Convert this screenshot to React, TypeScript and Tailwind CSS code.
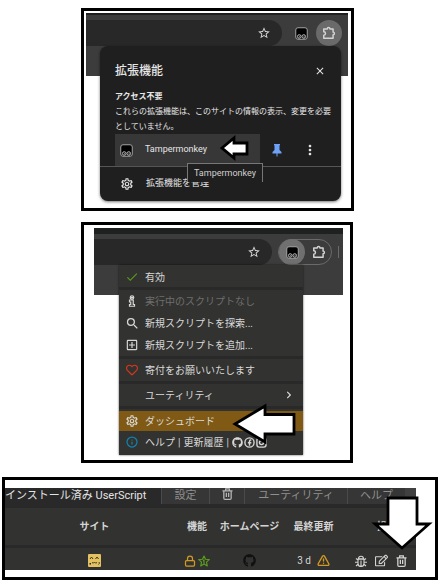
import type { ReactNode } from "react";
import {
  MdCheck,
  MdClose,
  MdMoreVert,
  MdOutlineAddBox,
  MdOutlineSettings,
  MdSearch,
  MdStarBorder,
} from "react-icons/md";
import { FaChevronRight, FaGithub, FaRegEdit, FaRegHeart } from "react-icons/fa";
import { Info, Lock, TriangleAlert } from "lucide-react";

function TamperIcon({ className }: { className?: string }) {
  return (
    <svg viewBox="0 0 26 26" className={className} aria-hidden="true">
      <rect x="1.5" y="1.5" width="23" height="23" rx="4.5" fill="#000" stroke="#a3a3a3" strokeWidth="2" />
      <g fill="#111" stroke="#c9c9c9" strokeWidth="1.8">
        <circle cx="8.5" cy="19" r="3.6" />
        <circle cx="17.5" cy="19" r="3.6" />
      </g>
      <circle cx="9" cy="19.5" r="1" fill="#ccc" />
      <circle cx="18" cy="19.5" r="1" fill="#ccc" />
    </svg>
  );
}

function PuzzleIcon({ className }: { className?: string }) {
  return (
    <svg viewBox="0 0 24 24" className={className} fill="none" stroke="currentColor" strokeWidth="2.5" strokeLinejoin="round" aria-hidden="true">
      <path d="M3 5h6a2.3 2.3 0 0 1 4.600 0H19v5.500a2.300 2.300 0 0 1 0 4.600V21H3v-5a3 3 0 0 0 0-6Z" />
    </svg>
  );
}

function PinIcon({ className }: { className?: string }) {
  return (
    <svg viewBox="0 0 20 26" className={className} fill="currentColor" aria-hidden="true">
      <path d="M4 0h12v2l-1 1v9l4 4v3h-8v5l-1 2-1-2v-5H1v-3l4-4V3L4 2Z" />
    </svg>
  );
}

function TrashIcon({ className }: { className?: string }) {
  return (
    <svg viewBox="0 0 24 26" className={className} fill="none" stroke="currentColor" strokeWidth="2.8" aria-hidden="true">
      <path d="M1 6h22M8 6V2h8v4M4 6v16q0 2.500 2.500 2.500h11q2.500 0 2.500-2.500V6M9.500 10.500v9M14.500 10.500v9" />
    </svg>
  );
}

function BugIcon({ className }: { className?: string }) {
  return (
    <svg viewBox="0 0 24 24" className={className} fill="none" stroke="currentColor" strokeWidth="2.200" aria-hidden="true">
      <path d="M7 7.500a5 5 0 0 1 10 0ZM6 8.500h12V17a6 6 0 0 1-12 0ZM12 11v11M6 10 2 7M18 10l4-3M0 14.500h6M18 14.500h6M6.500 18 2 22M17.500 18l4.500 4" />
    </svg>
  );
}

function StarOneIcon({ className }: { className?: string }) {
  return (
    <svg viewBox="0 0 24 24" className={className} fill="none" stroke="currentColor" strokeWidth="2.400" strokeLinejoin="round" aria-hidden="true">
      <path d="m12 2 3 6.500 7.500.8-5.500 5 1.500 7.500-6.500-3.800-6.500 3.800L7 14.300l-5.500-5L9 8.500ZM10 11.500 12 10V17" />
    </svg>
  );
}

function ScriptInfoIcon({ className }: { className?: string }) {
  return (
    <svg viewBox="0 0 16 24" className={className} fill="none" stroke="currentColor" strokeWidth="2.400" aria-hidden="true">
      <circle cx="8" cy="5" r="3.500" />
      <path d="M3 10h7.500v9H13v3.500H3V19h2.500v-5H3Z" />
      <circle cx="8" cy="5" r="1" />
    </svg>
  );
}

function FacebookIcon({ className }: { className?: string }) {
  return (
    <svg viewBox="0 0 24 24" className={className} fill="none" stroke="currentColor" strokeWidth="3" aria-hidden="true">
      <circle cx="12" cy="12" r="10" />
      <path d="M16 6.500h-1.500q-2.500 0-2.500 2.500v10M8.500 12.500H16" />
    </svg>
  );
}

function InstagramIcon({ className }: { className?: string }) {
  return (
    <svg viewBox="0 0 24 24" className={className} fill="none" stroke="currentColor" strokeWidth="3" aria-hidden="true">
      <rect x="2" y="2" width="20" height="20" rx="5" />
      <circle cx="12" cy="12" r="4.500" />
    </svg>
  );
}

function FaceIcon({ className }: { className?: string }) {
  return (
    <svg viewBox="0 0 26 26" className={className} aria-hidden="true">
      <rect width="26" height="26" rx="2" fill="#e3c264" />
      <g fill="none" stroke="#33290f" strokeWidth="1.800">
        <path d="m4 10 3-4 3 4M15 10l3-4 3 4M8 17q3 3 5-1 2 4 5 1M22 16q2 3-1 5" />
      </g>
      <path d="M3 18h3v3H3z" fill="#33290f" />
    </svg>
  );
}

function BlockArrow({ points, viewBox, className }: { points: string; viewBox: string; className: string }) {
  return (
    <svg viewBox={viewBox} className={className} aria-hidden="true">
      <polygon points={points} fill="#fff" stroke="#000" strokeWidth="2.800" />
    </svg>
  );
}

function ExtensionsPopup() {
  return (
    <section className="mr-[7px] ml-[14px] mt-[33px] rounded-lg bg-[#1f1f1f] pt-4 text-[#e6e6e6] shadow-[0_1px_3px_#0008] [grid-area:1/1]">
      <div className="pl-[15px]">
        <header className="flex h-[18px] items-center justify-between pr-[15px]">
          <h2 className="text-[12px] font-medium">拡張機能</h2>
          <button aria-label="閉じる"><MdClose className="size-3" /></button>
        </header>
        <h3 className="mt-[10px] text-[8px] leading-[14px] font-bold">アクセス不要</h3>
        <p className="text-[8px] leading-[15px] whitespace-nowrap">
          これらの拡張機能は、このサイトの情報の表示、変更を必要<br />としていません。
        </p>
        <div className="relative flex h-8 items-center">
          <button className="flex h-full w-[145px] items-center gap-3 bg-[#373737] pl-[5px] text-[9px]">
            <TamperIcon className="size-[13px]" />
            Tampermonkey
          </button>
          <button aria-label="固定を解除" className="ml-3 text-[#6ea2f8]"><PinIcon className="h-[13px] w-[10px]" /></button>
          <button aria-label="その他" className="ml-5"><MdMoreVert className="size-4" /></button>
          <BlockArrow className="absolute top-0 left-[105px] h-7 w-[29px]" viewBox="0 0 29 28" points="2,14 14,4 14,9 27,9 27,20 14,20 14,24" />
          <div role="tooltip" className="absolute top-[29px] left-[72px] border border-b-0 border-[#777] bg-[#1f1f1f] px-[6px] text-[9px] leading-[18px] text-[#d0d0d0]">
            Tampermonkey
          </div>
        </div>
      </div>
      <button className="flex h-[35px] w-full items-center gap-3 border-t border-[#555] pl-5 text-[9px]">
        <MdOutlineSettings className="size-[14px]" />
        拡張機能を管理
      </button>
    </section>
  );
}

function MenuItem({ icon, children, className = "h-[22px]" }: { icon?: ReactNode; children: ReactNode; className?: string }) {
  return (
    <button role="menuitem" className={`flex w-full items-center text-left ${className}`}>
      <span className="flex w-[26px] justify-center">{icon}</span>
      {children}
    </button>
  );
}

function Separator() {
  return <div role="separator" className="h-[3px] bg-[#292929]" />;
}

function TamperMenu() {
  return (
    <div role="menu" className="relative mt-[37px] mr-[40px] ml-[25px] bg-[#323230] pb-0.5 text-[10px] whitespace-nowrap text-[#d8d8d8] shadow-[0_0_2px_#000a] [grid-area:1/1]">
      <MenuItem className="h-[22px] pt-0.5" icon={<MdCheck className="size-[14px] text-[#5c9a1e]" />}>有効</MenuItem>
      <Separator />
      <MenuItem className="h-[22px] text-[#6e6e6e]" icon={<ScriptInfoIcon className="h-3 w-2 text-[#d8d8d8]" />}>実行中のスクリプトなし</MenuItem>
      <MenuItem icon={<MdSearch className="size-[15px]" />}>新規スクリプトを探索...</MenuItem>
      <MenuItem icon={<MdOutlineAddBox className="size-[14px]" />}>新規スクリプトを追加...</MenuItem>
      <Separator />
      <MenuItem icon={<FaRegHeart className="size-3 text-[#d9381e]" />}>寄付をお願いいたします</MenuItem>
      <Separator />
      <MenuItem>
        ユーティリティ
        <FaChevronRight className="mr-[10px] ml-auto size-2" />
      </MenuItem>
      <Separator />
      <MenuItem className="mt-0.5 h-5 bg-[#805a14]" icon={<MdOutlineSettings className="size-[14px]" />}>ダッシュボード</MenuItem>
      <div className="flex h-[22px] items-center">
        <span className="flex w-[26px] justify-center"><Info className="size-3 text-[#1283ab]" strokeWidth={2.5} /></span>
        <a href="#help">ヘルプ</a>
        <span className="px-[3px]">|</span>
        <a href="#changes">更新履歴</a>
        <span className="px-[3px]">|</span>
        <span className="flex gap-px">
          <a href="#github" aria-label="GitHub"><FaGithub className="size-[11px]" /></a>
          <a href="#facebook" aria-label="Facebook"><FacebookIcon className="size-[11px]" /></a>
          <a href="#instagram" aria-label="Instagram"><InstagramIcon className="size-[11px]" /></a>
        </span>
      </div>
      <BlockArrow className="absolute right-[7px] bottom-[9px] h-[44px] w-[64px]" viewBox="0 0 64 44" points="3,22 33,4 33,12.500 62,12.500 62,32 33,32 33,40" />
    </div>
  );
}

function Dashboard() {
  const tab = "flex items-center justify-center border-l border-[#4a4a4a] bg-[#363636]";
  return (
    <div className="relative bg-[#292929]">
      <div role="tablist" className="flex h-4 text-[11px] whitespace-nowrap text-[#8f8f8f]">
        <button role="tab" aria-selected="true" className="flex flex-1 items-center text-[#e4e4e4]">インストール済み UserScript</button>
        <button role="tab" className={`${tab} w-12`}>設定</button>
        <button role="tab" aria-label="ゴミ箱" className={`${tab} w-[35px] pb-1`}><TrashIcon className="h-3 w-[11px] text-[#b5b5b5]" /></button>
        <button role="tab" className={`${tab} w-[103px]`}>ユーティリティ</button>
        <button role="tab" className={`${tab} w-[58px]`}>ヘルプ</button>
        <span className="w-[11px] bg-[#404040]" />
      </div>
      <table className="mt-1 w-full table-fixed border-collapse text-center text-[10px] whitespace-nowrap text-[#d4d4d4]">
        <colgroup>
          <col />
          <col className="w-[26px]" />
          <col className="w-[79px]" />
          <col className="w-[49px]" />
          <col className="w-[78px]" />
        </colgroup>
        <thead>
          <tr className="h-[38px] border-b-[3px] border-[#292929] bg-[#323230]">
            <th className="p-0">サイト</th>
            <th className="p-0">機能</th>
            <th className="p-0">ホームページ</th>
            <th className="p-0">最終更新</th>
            <th className="p-0 pl-5">操作</th>
          </tr>
        </thead>
        <tbody>
          <tr className="h-6 bg-[#323230]">
            <td className="p-0"><FaceIcon className="mx-auto mt-1 size-[13px]" /></td>
            <td className="p-0">
              <span className="mt-1 flex justify-between">
                <Lock className="size-3 text-[#d39a22]" strokeWidth={2.5} />
                <StarOneIcon className="size-3 text-[#5c9a1e]" />
              </span>
            </td>
            <td className="p-0"><FaGithub className="mx-auto mt-1 size-[13px] text-[#111]" /></td>
            <td className="p-0">
              <span className="mt-1 flex items-center justify-center gap-1.5 leading-3">
                3 d <TriangleAlert className="size-[13px] text-[#d39a22]" strokeWidth={2.5} />
              </span>
            </td>
            <td className="p-0 pl-2">
              <span className="mt-1 flex items-center justify-center gap-2">
                <button aria-label="バグ報告"><BugIcon className="size-3" /></button>
                <button aria-label="編集"><FaRegEdit className="size-[13px]" /></button>
                <button aria-label="削除"><TrashIcon className="h-3 w-[11px]" /></button>
              </span>
            </td>
          </tr>
        </tbody>
      </table>
      <BlockArrow className="absolute top-2 right-[-17px] h-[54px] w-[62px]" viewBox="0 0 62 54" points="17,2 46,2 46,28 58,28 31,52 4,28 17,28" />
    </div>
  );
}

export default function App() {
  return (
    <main className="flex flex-col gap-[11px] bg-white pt-2 pb-[5px] font-[Roboto,'Noto_Sans_CJK_JP',sans-serif]">
      <figure className="mr-[88px] ml-[81px] grid border-[3px] border-black pt-0.5 pr-[3px] pb-[7px] pl-0.5">
        <div className="h-[63px] border-t-2 border-[#1f1f1f] bg-[#3c3c3c] pt-[5px] [grid-area:1/1]">
          <div className="flex h-[26px] items-center text-[#d4d4d4]">
            <div className="flex h-full flex-1 items-center justify-end rounded-r-full bg-[#282828] pr-[11px]">
              <button aria-label="ブックマーク"><MdStarBorder className="size-[14px]" /></button>
            </div>
            <button aria-label="Tampermonkey" className="ml-[13px]"><TamperIcon className="size-[13px]" /></button>
            <button aria-label="拡張機能" className="mr-[6px] ml-2 flex size-[26px] items-center justify-center rounded-full bg-[#6a6a6a]">
              <PuzzleIcon className="size-[14px]" />
            </button>
          </div>
        </div>
        <ExtensionsPopup />
      </figure>

      <figure className="mr-[89px] ml-[81px] grid border-[3px] border-black pt-[3px] pr-[7px] pb-[5px] pl-[10px]">
        <div className="h-[67px] border-t-[6px] border-[#1f2120] bg-[#3c3c3c] pt-[5px] [grid-area:1/1]">
          <div className="flex h-[26px] items-center text-[#d4d4d4]">
            <div className="flex h-full flex-1 items-center justify-end rounded-r-full bg-[#282828] pr-[11px]">
              <button aria-label="ブックマーク"><MdStarBorder className="size-[14px]" /></button>
            </div>
            <div className="ml-[6px] flex h-[26px] w-[54px] items-center rounded-full border border-[#6a6a6a]">
              <button aria-label="Tampermonkey" className="flex size-[26px] items-center justify-center rounded-full bg-[#707070]">
                <TamperIcon className="size-[13px]" />
              </button>
              <button aria-label="拡張機能" className="ml-[7px]"><PuzzleIcon className="size-[14px]" /></button>
            </div>
            <span className="mr-1 ml-[6px] h-3 w-px bg-[#6a6a6a]" />
          </div>
        </div>
        <TamperMenu />
      </figure>

      <figure className="mt-[3px] mr-1 ml-0.5 border-[3px] border-black pt-2 pr-[19px] pb-[7px]">
        <Dashboard />
      </figure>
    </main>
  );
}
